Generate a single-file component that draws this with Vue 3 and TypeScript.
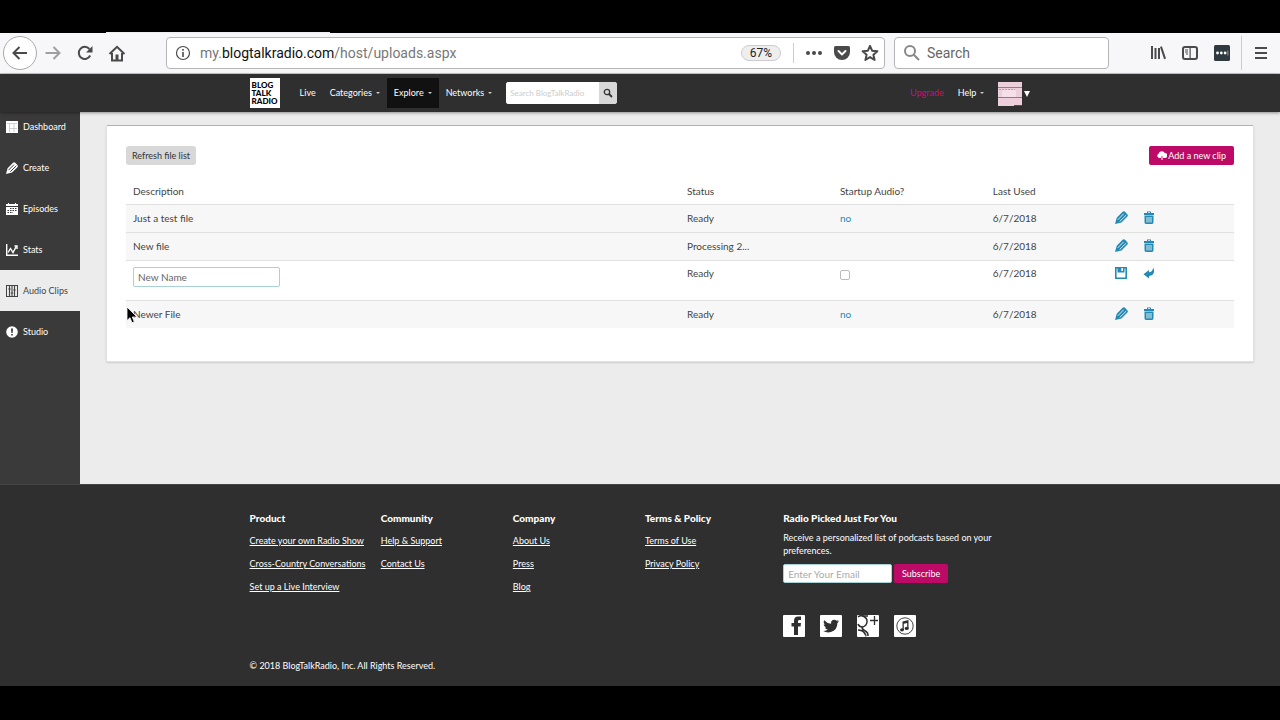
<script setup lang="ts">
import { ref } from 'vue'

interface Clip {
  name: string
  status: string
  startup: string
  used: string
  editing?: boolean
}

const clips: Clip[] = [
  { name: 'Just a test file', status: 'Ready', startup: 'no', used: '6/7/2018' },
  { name: 'New file', status: 'Processing 2...', startup: '', used: '6/7/2018' },
  { name: '', status: 'Ready', startup: '', used: '6/7/2018', editing: true },
  { name: 'Newer File', status: 'Ready', startup: 'no', used: '6/7/2018' },
]

const sections = ['Dashboard', 'Create', 'Episodes', 'Stats', 'Audio Clips', 'Studio']

const footer = [
  { title: 'Product', links: ['Create your own Radio Show', 'Cross-Country Conversations', 'Set up a Live Interview'] },
  { title: 'Community', links: ['Help & Support', 'Contact Us'] },
  { title: 'Company', links: ['About Us', 'Press', 'Blog'] },
  { title: 'Terms & Policy', links: ['Terms of Use', 'Privacy Policy'] },
]

const newName = ref('New Name')
const startup = ref(false)
</script>

<template>
  <div class="screen">
    <div class="tabstrip"><span></span></div>
    <header class="toolbar">
      <div class="history">
        <button class="round" aria-label="Back">
          <svg width="18" height="16" viewBox="0 0 18 16"><path d="M16 8H3M8.500 2L2.500 8l6 6" class="s2" /></svg>
        </button>
        <button class="tool faded" aria-label="Forward">
          <svg width="18" height="16" viewBox="0 0 18 16"><path d="M1.500 8H15M9.500 2l6 6-6 6" class="s2" /></svg>
        </button>
        <button class="tool" aria-label="Reload">
          <svg width="16" height="16" viewBox="0 0 16 16"><path d="M13.200 10.500A6 6 0 1 1 12.400 4" class="s2" /><path d="M15.500 1v6.500H9z" /></svg>
        </button>
        <button class="tool" aria-label="Home">
          <svg width="18" height="17" viewBox="0 0 18 17"><path d="M1.500 9L9 1.800 16.500 9M4 8v7.500h10V8" class="s2" /><path d="M7.500 15V9.500h3V15z" /></svg>
        </button>
      </div>
      <div class="address">
        <svg class="info" width="16" height="16" viewBox="0 0 16 16"><circle cx="8" cy="8" r="6.500" class="s1" /><path d="M7.200 4h1.600v1.700H7.200zM7.200 7h1.600v5H7.200z" /></svg>
        <p class="url">my.<b>blogtalkradio.com</b>/host/uploads.aspx</p>
        <button class="zoom">67%</button>
        <i class="bar"></i>
        <button class="tool" aria-label="Page actions">
          <svg width="18" height="16" viewBox="0 0 18 16"><circle cx="3" cy="8" r="2" /><circle cx="9" cy="8" r="2" /><circle cx="15" cy="8" r="2" /></svg>
        </button>
        <button class="tool" aria-label="Save to Pocket">
          <svg width="16" height="16" viewBox="0 0 16 16"><path d="M1.500 1h13Q16 1 16 2.500V7a8 8 0 0 1-16 0V2.500Q0 1 1.500 1z" /><path d="M4.500 6L8 9.400 11.500 6" stroke="#fff" stroke-width="2" fill="none" stroke-linecap="round" /></svg>
        </button>
        <button class="tool" aria-label="Bookmark">
          <svg width="18" height="18" viewBox="0 0 18 18"><path d="M9 1.800l2.100 4.900 5.300.5-4 3.500 1.200 5.200L9 13.100l-4.600 2.800 1.200-5.200-4-3.500 5.300-.5z" class="s2" stroke-linejoin="round" /></svg>
        </button>
      </div>
      <label class="find">
        <svg width="18" height="18" viewBox="0 0 18 18"><circle cx="7" cy="7" r="5" class="s2" /><path d="M10.800 10.800L16 16" class="s2" /></svg>
        <input type="text" placeholder="Search" aria-label="Search the web">
      </label>
      <div class="extras">
        <button class="tool" aria-label="Library">
          <svg width="16" height="16" viewBox="0 0 16 16"><path d="M1 1h2v13H1zM4.500 3h2v11h-2zM8 3h2v11H8zM10 2l1.900-.8L16 13.500l-1.900.7z" /></svg>
        </button>
        <button class="tool" aria-label="Sidebars">
          <svg width="16" height="16" viewBox="0 0 16 16"><rect x="1" y="2" width="14" height="12" rx="2" class="s2" /><path d="M7.500 2h1.200v12H7.500zM3 4.500h3v1H3zM3 6.500h3v1H3zM4 8.500h2v1H4z" /></svg>
        </button>
        <button class="tool" aria-label="Password manager">
          <svg width="16" height="16" viewBox="0 0 16 16"><rect width="16" height="16" rx="1.500" fill="#2f3a40" /><g fill="#fff"><circle cx="3.500" cy="8" r="1.400" /><circle cx="7.300" cy="8" r="1.400" /><circle cx="11.100" cy="8" r="1.400" /><path d="M13.500 5.500h.8v5h-.8z" fill="#aaa" /></g></svg>
        </button>
        <i class="rule"></i>
        <button class="tool" aria-label="Menu">
          <svg width="16" height="16" viewBox="0 0 16 16"><path d="M2 3h12M2 8h12M2 13h12" class="s2" /></svg>
        </button>
      </div>
    </header>

    <nav class="site">
      <div class="inner">
        <a href="#" class="logo">BLOG<br>TALK<br>RADIO</a>
        <a href="#">Live</a>
        <a href="#">Categories<i class="caret"></i></a>
        <a href="#" class="open">Explore<i class="caret"></i></a>
        <a href="#">Networks<i class="caret"></i></a>
        <form class="lookup" @submit.prevent>
          <input type="text" placeholder="Search BlogTalkRadio" aria-label="Search BlogTalkRadio">
          <button aria-label="Search">
            <svg width="10" height="10" viewBox="0 0 10 10"><circle cx="4" cy="4" r="2.700" fill="none" stroke="#333" stroke-width="1.300" /><path d="M6 6l3 3" stroke="#333" stroke-width="1.800" /></svg>
          </button>
        </form>
        <a href="#" class="upgrade">Upgrade</a>
        <a href="#">Help<i class="caret"></i></a>
        <a href="#" class="avatar" aria-label="Account">
          <svg width="24" height="24" viewBox="0 0 24 24"><rect width="24" height="24" fill="#edcfdb" /><rect x="4" y="8" width="14" height="7" fill="#f5e0e8" /><path d="M0 5.500h24M0 15.500h24" stroke="#8f7c86" /><path d="M1 7.500h16" stroke="#b9a1ac" stroke-dasharray="2 1" /><path d="M16 23h8v1h-8z" fill="#554b50" /></svg>
          <svg width="6" height="6" viewBox="0 0 6 6"><path d="M0 0h6L3 6z" fill="#fff" /></svg>
        </a>
      </div>
    </nav>

    <div class="body">
      <aside>
        <ul>
          <li v-for="s in sections" :key="s">
            <a href="#" :class="{ active: s === 'Audio Clips' }">
              <svg width="12" height="12" viewBox="0 0 12 12">
                <g v-if="s === 'Dashboard'"><path d="M0 0h12v12H0z" /><path d="M1 2.500h10M3.500 3v8M8 3v8M4 7.500h7" stroke="#c4c4c4" stroke-width=".8" /></g>
                <g v-else-if="s === 'Create'"><path d="M0 12L1.600 6.200 6.800 1Q8-.2 9.200.8L11.400 3Q12.400 4.200 11.200 5.400L6 10.500z" /><path d="M2.500 8.200L8 2.600M4.300 9.700L10.300 3.800" stroke="#3a3a3a" stroke-width="1" /></g>
                <g v-else-if="s === 'Episodes'"><path d="M0 1h2V0h1v1h6V0h1v1h2v11H0z" /><path d="M0 3.500h12" stroke="#3a3a3a" /><path d="M4 5.500h7M1.500 7.500H11M1.500 9.500H7" stroke="#3a3a3a" stroke-dasharray="1.500 1" /></g>
                <g v-else-if="s === 'Stats'" fill="none" stroke="#fff" stroke-width="1.400"><path d="M.7 0v11.300H12" /><path d="M2 8.500L4.500 4.500 7 8.500 10.500 2" /><path d="M8.500 2H11v3" /></g>
                <g v-else-if="s === 'Audio Clips'" fill="none" stroke="#444"><rect x=".5" y=".5" width="11" height="11" /><path d="M3.500 1v10M6 1v10M8.500 1v10M2.300 4h2.400M4.800 8h2.400M7.300 5h2.400" stroke-width="1.100" /></g>
                <g v-else><circle cx="6" cy="6" r="5.800" /><path d="M5 2.500h2L6.600 7H5.400zM5.200 8h1.600v1.500H5.200z" fill="#333" /></g>
              </svg>
              {{ s }}
            </a>
          </li>
        </ul>
      </aside>

      <main>
        <section class="card">
          <div class="actions">
            <button class="refresh">Refresh file list</button>
            <button class="primary">
              <svg width="10" height="10" viewBox="0 0 10 10"><path d="M2.500 7A2.200 2.200 0 0 1 1.600 2.800 3.300 3.300 0 0 1 7.800 2 2.500 2.500 0 0 1 8 7H6.200L5 4.600 3.800 7z" fill="#fff" /><path d="M5 5.500v3.500" stroke="#fff" /></svg>
              Add a new clip
            </button>
          </div>
          <table>
            <colgroup><col class="c-name"><col class="c-mid"><col class="c-mid"><col class="c-used"><col></colgroup>
            <thead>
              <tr><th>Description</th><th>Status</th><th>Startup Audio?</th><th>Last Used</th><th></th></tr>
            </thead>
            <tbody>
              <tr v-for="(c, n) in clips" :key="n" :class="{ editing: c.editing }">
                <td>
                  <input v-if="c.editing" v-model="newName" class="rename" type="text" aria-label="Description">
                  <template v-else>{{ c.name }}</template>
                </td>
                <td>{{ c.status }}</td>
                <td>
                  <input v-if="c.editing" v-model="startup" type="checkbox" aria-label="Startup audio">
                  <a v-else-if="c.startup" href="#">{{ c.startup }}</a>
                </td>
                <td>{{ c.used }}</td>
                <td class="icons">
                  <div v-if="c.editing" class="tools">
                    <button aria-label="Save"><svg width="12" height="12" viewBox="0 0 12 12"><path d="M.8.800h10.400v10.400H.8z" fill="none" stroke="#238ab5" stroke-width="1.600" /><path d="M2.500 0h7v5.500h-7z" /><path d="M6.300 1h1.600v3H6.300z" fill="#fff" /></svg></button>
                    <button aria-label="Cancel"><svg width="12" height="12" viewBox="0 0 12 12"><path d="M.5 7.200L6 3V5.300Q9.500 5 10.300.5 13 8.300 6 9v2.500z" /></svg></button>
                  </div>
                  <div v-else class="tools">
                    <button aria-label="Edit"><svg width="13" height="13" viewBox="0 0 12 12"><path d="M0 12L1.600 6.200 6.800 1Q8-.2 9.200.8L11.400 3Q12.400 4.200 11.200 5.400L6 10.500z" /><path d="M2.500 8.200L8 2.600M4.300 9.700L10.300 3.800" stroke="#f7f7f7" stroke-width=".8" /></svg></button>
                    <button aria-label="Delete"><svg width="12" height="13" viewBox="0 0 12 13"><path d="M1 2h3V.500h4V2h3v2H1zM1.500 4.500h9V11q0 2-1.500 2H3q-1.500 0-1.500-2z" /><path d="M4 6v5.500M6 6v5.500M8 6v5.500" stroke="#f7f7f7" stroke-width=".9" /><path d="M5 1.300h2V2H5z" fill="#f7f7f7" /></svg></button>
                  </div>
                </td>
              </tr>
            </tbody>
          </table>
          <svg class="pointer" width="12" height="18" viewBox="0 0 12 18"><path d="M1 1v13.500l3-2.800 2 5 2.300-1-2-4.700H11z" fill="#000" stroke="#fff" stroke-width=".8" /></svg>
        </section>
      </main>
    </div>

    <footer>
      <div class="inner">
        <div class="columns">
          <div v-for="f in footer" :key="f.title">
            <h4>{{ f.title }}</h4>
            <ul><li v-for="l in f.links" :key="l"><a href="#">{{ l }}</a></li></ul>
          </div>
          <div>
            <h4>Radio Picked Just For You</h4>
            <p>Receive a personalized list of podcasts based on your preferences.</p>
            <form class="mail" @submit.prevent>
              <input type="email" placeholder="Enter Your Email" aria-label="Email">
              <button>Subscribe</button>
            </form>
            <div class="social">
              <a href="#" aria-label="Facebook"><svg width="22" height="22" viewBox="0 0 22 22"><rect width="22" height="22" rx="1" fill="#fff" /><path d="M11 20v-8.500H8.500V8H11V5.800Q11 1.500 15.300 1.500H18V5h-1.700Q15 5 15 6.300V8h3l-.4 3.500H15V20z" /></svg></a>
              <a href="#" aria-label="Twitter"><svg width="22" height="22" viewBox="0 0 22 22"><rect width="22" height="22" rx="1" fill="#fff" /><path d="M19 6.200q-.8.4-1.700.5.900-.6 1.200-1.600-.9.500-1.900.7a3.200 3.200 0 0 0-5.500 2.900Q7 8.500 4.200 5.200q-1.400 2.600 1 4.400-.8 0-1.500-.4 0 2.500 2.600 3.200-.7.200-1.400 0 .7 2 3 2.200-2 1.700-4.700 1.400 3.700 2.200 7.700 1.100 6.400-2 6.500-9.200 1-.7 1.600-1.700z" /></svg></a>
              <a href="#" aria-label="Google Plus"><svg width="22" height="22" viewBox="0 0 22 22"><rect width="22" height="22" rx="1" fill="#fff" /><g fill="none" stroke="#2f2f2f"><path d="M1 2Q3 0 6 1q4.500 2 4 6t-4.500 5Q2 12 1 9" stroke-width="1.500" /><path d="M5 1h6M5.500 12q-1 2 2 3.500 4 2 3.500 5.500M1 15q4.500 0 6.500 3t1 3" stroke-width="1.600" /><path d="M17.500 1v9M13 5.500h8" stroke-width="1.300" /></g></svg></a>
              <a href="#" aria-label="iTunes"><svg width="22" height="22" viewBox="0 0 22 22"><rect width="22" height="22" rx="1" fill="#fff" /><circle cx="11" cy="11" r="8.200" fill="none" stroke="#2f2f2f" stroke-width=".9" /><path d="M8.500 6.500L14.500 5v8.500h-1.300V8L9.800 8.800V15H8.500z" /><ellipse cx="8" cy="14.800" rx="2" ry="1.600" /><ellipse cx="12.700" cy="13.400" rx="2" ry="1.600" /></svg></a>
            </div>
          </div>
        </div>
        <p class="legal">© 2018 BlogTalkRadio, Inc. All Rights Reserved.</p>
      </div>
    </footer>
  </div>
</template>

<style>
body { background: #000; }
</style>

<style scoped>
* { box-sizing: border-box; }
.screen { min-height: 100vh; background: #000; font: 9px/13px Lato, "Open Sans", sans-serif; color: #444; padding-bottom: 34px; }
button, input { font: inherit; color: inherit; margin: 0; }
button { border: 0; padding: 0; background: none; display: flex; align-items: center; justify-content: center; }
ul { list-style: none; margin: 0; padding: 0; }
p, h4 { margin: 0; }
a { text-decoration: none; }
svg { display: block; flex: none; }

.tabstrip { height: 33px; display: flex; align-items: flex-end; padding-left: 106px; }
.tabstrip span { width: 224px; height: 1px; background: #eee; }

.toolbar { height: 41px; background: #f7f7fa; border-bottom: 1px solid #ccc; display: flex; align-items: center; font-family: Roboto, Inter, sans-serif; }
.toolbar svg { fill: #4a4a4a; }
.s1, .s2 { fill: none; stroke: #4a4a4a; stroke-width: 1.2; }
.s2 { stroke-width: 2; }
.tool { width: 32px; height: 32px; }
.faded { opacity: .5; }
.history { display: flex; align-items: center; padding-left: 3px; width: 166px; }
.round { width: 34px; height: 34px; border: 1px solid #aaa; border-radius: 50%; background: #fff; }
.address { flex: 1; height: 32px; border: 1px solid #b5b5b5; border-radius: 4px; background: #fff; display: flex; align-items: center; padding-left: 8px; }
.address .tool { width: 28px; }
.url { flex: 1; padding-left: 9px; font-size: 14px; line-height: 20px; color: #777; }
.url b { font-weight: 400; color: #111; }
.zoom { width: 40px; height: 16px; border: 1px solid #ccc; border-radius: 8px; background: #eee; font-size: 12px; color: #222; }
.bar { width: 1px; height: 20px; background: #ccc; margin: 0 6px 0 12px; }
.find { width: 215px; height: 32px; margin-left: 9px; border: 1px solid #b5b5b5; border-radius: 4px; background: #fff; display: flex; align-items: center; padding-left: 8px; }
.find .s2 { stroke: #888; }
.find input { border: 0; outline: 0; background: none; min-width: 0; flex: 1; padding: 0 0 0 6px; font-size: 14px; line-height: 20px; }
.find input::placeholder { color: #666; opacity: 1; }
.extras { display: flex; align-items: center; margin-left: 33px; padding-right: 3px; }
.rule { width: 1px; height: 34px; background: #ccc; margin-left: 3px; margin-right: 3px; }

.inner { width: 61%; min-width: 780px; margin: 0 auto; }
.site { position: relative; z-index: 1; background: #2f2f2f; color: #fff; box-shadow: 0 1px 3px #0006; }
.site .inner { display: flex; align-items: center; height: 38px; }
.site a { color: #fff; display: flex; align-items: center; height: 30px; padding: 0 7px 1px; }
.site .logo { width: 30px; height: 30px; display: block; background: #fff; color: #000; font-family: "Lato Black", Lato, sans-serif; font-weight: 900; font-size: 8px; line-height: 8px; padding: 3px 2px; margin-right: 13px; }
.site .open { background: #111; }
.caret { border: 2px solid transparent; border-top-color: #ccc; border-bottom: 0; margin-left: 4px; }
.lookup { display: flex; width: 111px; height: 22px; margin-left: 7px; border-radius: 3px; overflow: hidden; background: #fff; }
.lookup input { flex: 1; min-width: 0; border: 0; padding: 0 4px; font-size: 8px; background: #fff; }
.lookup input::placeholder { color: #ccc; opacity: 1; }
.lookup button { width: 18px; background: #d8d8d8; }
.site .upgrade { margin-left: auto; color: #d00a70; }
.site .avatar { padding: 2px 0 0 7px; gap: 2px; }

.body { display: flex; min-height: 372px; background: #ececec; }
aside { width: 80px; background: #3a3a3a; }
aside ul { margin-top: -6px; }
aside a { display: flex; align-items: center; gap: 5px; height: 41px; padding-left: 6px; color: #fff; font-size: 9px; white-space: nowrap; }
aside svg { fill: #fff; }
aside .active { background: #ececec; color: #444; }
main { flex: 1; padding: 13px 26px; }
.card { position: relative; min-height: 237px; background: #fff; border: 1px solid #e2e2e2; border-top: 1px solid #6fd896; border-radius: 2px; box-shadow: 0 1px 2px #0002; padding: 20px 19px; }
.actions { display: flex; justify-content: space-between; }
.refresh { height: 19px; padding: 0 6px; border-radius: 3px; background: #d8d8d8; color: #333; }
.primary { height: 19px; padding: 0 8px; border-radius: 2px; background: #bd0a66; color: #fff; gap: 1px; }
table { width: 100%; margin-top: 13px; border-collapse: collapse; table-layout: fixed; font-size: 10px; }
.c-name { width: 50%; }
.c-mid { width: 13.8%; }
.c-used { width: 11%; }
th, td { text-align: left; font-weight: 400; padding: 0 7px; vertical-align: middle; white-space: nowrap; }
th { height: 26px; padding-top: 2px; }
td { height: 28px; border-top: 1px solid #e0e0e0; background: #f7f7f7; }
.icons { padding-bottom: 2px; }
td a { color: #238ab5; }
.editing td { height: 40px; background: #fff; vertical-align: top; padding-top: 6px; }
.rename { display: block; width: 147px; height: 20px; border: 1px solid #a8d3d6; border-radius: 2px; padding: 0 4px; color: #666; background: #fff; }
td input[type=checkbox] { appearance: none; display: block; width: 10px; height: 10px; margin-top: 3px; border: 1px solid #bbb; border-radius: 2px; background: #fff; }
.tools { display: flex; gap: 15px; }
.tools button { width: 13px; height: 13px; }
.tools svg { fill: #238ab5; }
.pointer { position: absolute; left: 19px; top: 180px; }

footer { background: #2f2f2f; color: #fff; padding: 27px 0 14px; border-top: 1px solid #444; }
.columns { display: grid; grid-template-columns: 131fr 132fr 132fr 138fr 247fr; height: 147px; }
h4 { font-size: 10px; line-height: 13px; font-weight: 900; }
footer li { margin-top: 10px; }
footer h4 + ul { margin-top: -1px; }
footer li a { color: #fff; text-decoration: underline; }
footer h4 + p { margin-top: 6px; width: 210px; }
.mail { display: flex; gap: 2px; margin-top: 7px; }
.mail input { width: 109px; height: 19px; border: 1px solid #a8d3d6; border-radius: 2px; padding: 0 4px; font-size: 10px; background: #fff; }
.mail input::placeholder { color: #aaa; opacity: 1; }
.mail button { width: 54px; height: 19px; background: #bd0a66; border-radius: 2px; }
.social { display: flex; gap: 15px; margin-top: 32px; }
.social svg { fill: #2f2f2f; }
</style>
